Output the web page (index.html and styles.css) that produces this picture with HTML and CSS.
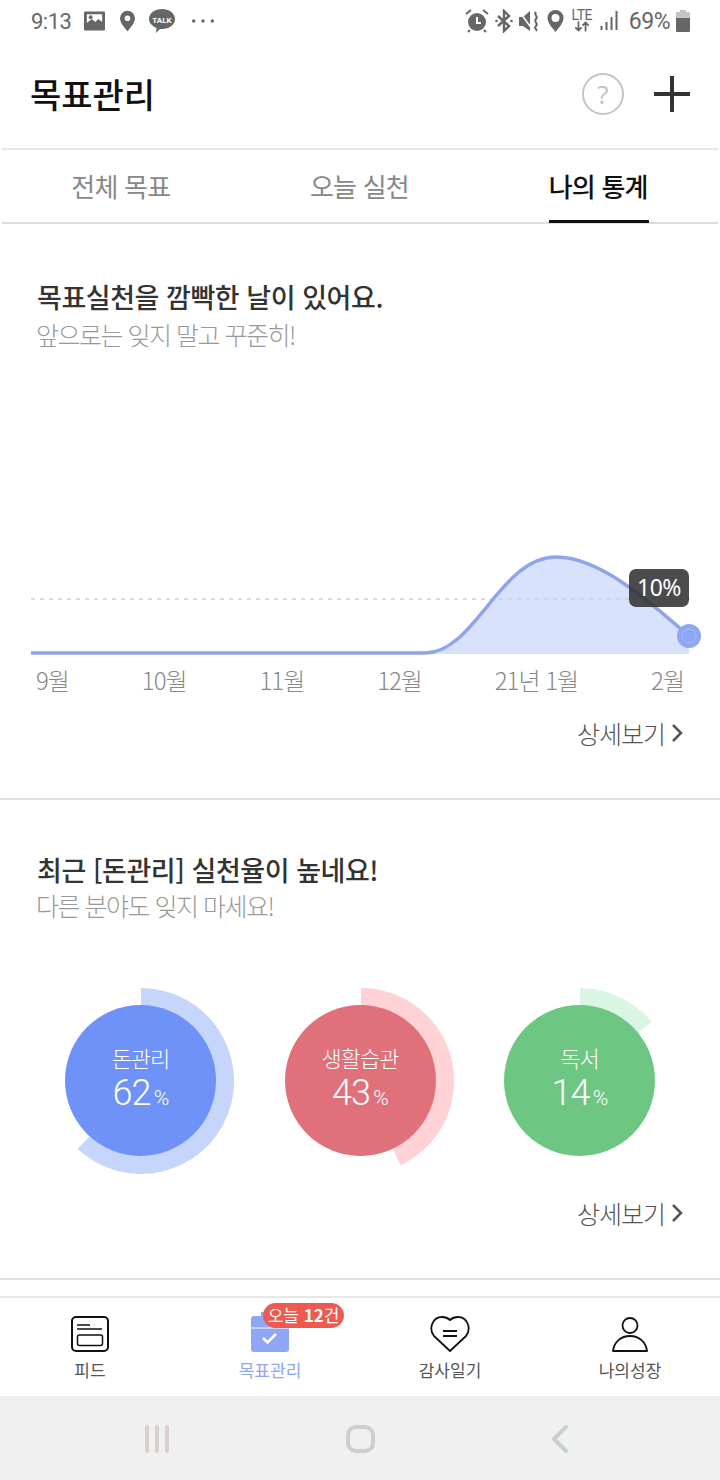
FILE: index.html
```html
<!DOCTYPE html>
<html lang="ko">

<head>
    <meta charset="UTF-8">
    <meta name="viewport" content="width=device-width, initial-scale=1.0">
    <title>목표관리</title>
    <link rel="stylesheet" href="styles.css">
</head>

<body>
    <div class="screen">
        <div class="status">
            <div class="status-left">
                <span class="clock">9:13</span>
                <svg class="ic" width="21" height="20" viewBox="0 0 22 20"><path fill="#666" fill-rule="evenodd" d="M1 0h20a1 1 0 0 1 1 1v18a1 1 0 0 1-1 1H1a1 1 0 0 1-1-1V1a1 1 0 0 1 1-1zM3 3v9l5-4 4 3 3-3 4 3V3z"/><circle cx="7" cy="6" r="2" fill="#666"/></svg>
                <svg class="ic pin" width="15" height="22" viewBox="0 0 16 22"><path fill="#666" fill-rule="evenodd" d="M8 0a8 8 0 0 1 8 8c0 5-5 10-8 14C5 18 0 13 0 8a8 8 0 0 1 8-8zm0 5a3 3 0 1 0 0 6 3 3 0 0 0 0-6z"/></svg>
                <svg class="ic talk" width="26" height="24" viewBox="0 0 26 24"><path fill="#666" d="M13 0c7 0 13 4 13 10s-6 10-13 10h-2l-4 4 .5-5C3 17 0 14 0 10 0 4 6 0 13 0z"/><text x="13" y="13.500" class="talk-text">TALK</text></svg>
                <svg class="ic dots" width="22" height="4" viewBox="0 0 22 4"><circle cx="1.700" cy="2" r="1.700" fill="#666"/><circle cx="11" cy="2" r="1.700" fill="#666"/><circle cx="20.300" cy="2" r="1.700" fill="#666"/></svg>
            </div>
            <div class="status-right">
                <svg width="24" height="24" viewBox="0 0 24 24"><circle cx="12" cy="13" r="9" fill="#666"/><path d="M12 8v6h4" stroke="#fff" stroke-width="2" fill="none"/><path d="M1 5l5-4M23 5l-5-4M5 21l-2 2M19 21l2 2" stroke="#666" stroke-width="2"/></svg>
                <svg width="18" height="24" viewBox="0 0 18 24"><path d="M3 7l11 10-5 5V2l5 5L3 17" stroke="#666" stroke-width="2.400" fill="none"/><circle cx="1.500" cy="12" r="1.300" fill="#666"/><circle cx="16.500" cy="12" r="1.300" fill="#666"/></svg>
                <svg width="22" height="24" viewBox="0 0 22 24"><path fill="#666" d="M0 8h4l7-6v20l-7-5H0z"/><path d="M0 2l13 18" stroke="#fff" stroke-width="1.500"/><path d="M17 3c-3 3 3 4 0 7s3 4 0 7 2 3 0 5" stroke="#666" stroke-width="2" fill="none"/></svg>
                <svg width="17" height="22" viewBox="0 0 16 22"><path fill="#666" fill-rule="evenodd" d="M8 0a8 8 0 0 1 8 8c0 5-5 10-8 14C5 18 0 13 0 8a8 8 0 0 1 8-8zm0 4a4 4 0 1 0 0 8 4 4 0 0 0 0-8z"/></svg>
                <div class="lte">
                    <span class="lte-text">LTE</span>
                    <svg width="16" height="11" viewBox="0 0 18 11"><path d="M5 0v10M1.500 6.500L5 10l3.500-3.500M13 11V1M9.500 4.500L13 1l3.500 3.500" stroke="#666" stroke-width="2" fill="none"/></svg>
                </div>
                <svg class="signal" width="19" height="22" viewBox="0 0 19 22"><path d="M1.500 16v4M6.500 12v8M11.500 7v13M16.500 1v19" stroke="#666" stroke-width="2"/></svg>
                <span class="batt-num">69%</span>
                <svg width="14" height="22" viewBox="0 0 14 22"><path fill="#c4c4c4" d="M4 0h6v2h3a1 1 0 0 1 1 1v5H0V3a1 1 0 0 1 1-1h3z"/><path fill="#666" d="M0 8h14v13a1 1 0 0 1-1 1H1a1 1 0 0 1-1-1z"/></svg>
            </div>
        </div>

        <div class="topbar">
            <h1 class="page-title">목표관리</h1>
            <div class="topbar-btns">
                <div class="help">?</div>
                <svg width="36" height="36" viewBox="0 0 36 36"><path d="M18 1v34M1 18h34" stroke="#333" stroke-width="4" stroke-linecap="round"/></svg>
            </div>
        </div>

        <div class="tabs">
            <div class="tab"><span>전체 목표</span></div>
            <div class="tab"><span>오늘 실천</span></div>
            <div class="tab on"><span>나의 통계</span></div>
        </div>

        <div class="content">
            <section class="block block-chart">
                <h2>목표실천을 깜빡한 날이 있어요.</h2>
                <p>앞으로는 잊지 말고 꾸준히!</p>
                <div class="chart">
                    <svg width="720" height="130" viewBox="0 540 720 130">
                        <path d="M425 654C475 654 500 557 556 557C600 557 650 602 689 636V654Z" fill="#d9e2fc"/>
                        <path d="M31 599H690" stroke="#cfcfcf" stroke-width="1.500" stroke-dasharray="4 5" fill="none"/>
                        <path d="M31 653H425C475 653 500 557 556 557C600 557 650 602 689 636" stroke="#8ea5eb" stroke-width="3.500" fill="none"/>
                        <circle cx="689" cy="636" r="12" fill="#8ea6f5"/>
                        <circle cx="689" cy="636" r="7" fill="none" stroke="#a9bcf7" stroke-width="1"/>
                    </svg>
                    <div class="tip">10%</div>
                </div>
                <div class="axis">
                    <span>9월</span><span>10월</span><span>11월</span><span>12월</span><span>21년 1월</span><span>2월</span>
                </div>
                <a class="more">상세보기<svg width="12" height="20" viewBox="0 0 12 20"><path d="M2 2l8 8-8 8" stroke="#555" stroke-width="2.500" fill="none"/></svg></a>
            </section>

            <section class="block block-rate">
                <h2>최근 [돈관리] 실천율이 높네요!</h2>
                <p>다른 분야도 잊지 마세요!</p>
                <div class="donuts">
                    <div class="donut">
                        <svg width="190" height="190" viewBox="0 0 190 190"><path d="M95 2A93 93 0 1 1 31.600 163L95 95V2Z" fill="#c6d5fc"/></svg>
                        <div class="disc blue"><span class="d-name">돈관리</span><span class="d-val">62<small>%</small></span></div>
                    </div>
                    <div class="donut">
                        <svg width="190" height="190" viewBox="0 0 190 190"><path d="M95 2A93 93 0 0 1 134.600 179.200L95 95V2Z" fill="#ffd2d6"/></svg>
                        <div class="disc red"><span class="d-name">생활습관</span><span class="d-val">43<small>%</small></span></div>
                    </div>
                    <div class="donut">
                        <svg width="190" height="190" viewBox="0 0 190 190"><path d="M95 2A93 93 0 0 1 166.600 35.800L95 95V2Z" fill="#daf5e3"/></svg>
                        <div class="disc green"><span class="d-name">독서</span><span class="d-val">14<small>%</small></span></div>
                    </div>
                </div>
                <a class="more">상세보기<svg width="12" height="20" viewBox="0 0 12 20"><path d="M2 2l8 8-8 8" stroke="#555" stroke-width="2.500" fill="none"/></svg></a>
            </section>
        </div>

        <nav class="nav">
            <div class="nav-item">
                <svg width="38" height="36" viewBox="0 0 38 36"><rect x="1" y="1" width="36" height="34" rx="4" fill="none" stroke="#111" stroke-width="2"/><path d="M6 9h13M6 13h25" stroke="#111" stroke-width="1.500"/><rect x="6.500" y="19" width="25" height="10.500" rx="2" fill="none" stroke="#111" stroke-width="1.500"/></svg>
                <span>피드</span>
            </div>
            <div class="nav-item on">
                <svg class="cal" width="38" height="36" viewBox="0 0 38 36"><rect x="10" y="-4" width="3" height="8" fill="#8ea6f5"/><path d="M3 0h32a3 3 0 0 1 3 3v30a3 3 0 0 1-3 3H3a3 3 0 0 1-3-3V3a3 3 0 0 1 3-3z" fill="#8ea6f5"/><path d="M0 12h38" stroke="#fff" stroke-width="1"/><path d="M12 22l4.500 4.500L25 18" stroke="#fff" stroke-width="2.500" fill="none"/></svg>
                <span>목표관리</span>
                <div class="badge">오늘 <b>12</b>건</div>
            </div>
            <div class="nav-item">
                <svg width="40" height="36" viewBox="0 0 40 36"><path d="M20 35L4 20C-2 12 3 1 12 1c3 0 6 1 8 3 2-2 5-3 8-3 9 0 14 11 8 19z" fill="none" stroke="#111" stroke-width="1.800" stroke-linejoin="round"/><path d="M13 15h14M13 20h14" stroke="#111" stroke-width="1.800"/></svg>
                <span>감사일기</span>
            </div>
            <div class="nav-item">
                <svg width="38" height="36" viewBox="0 0 38 36"><circle cx="19" cy="9.500" r="7.500" fill="none" stroke="#111" stroke-width="1.800"/><path d="M2 35c1-9 8-15 17-15s16 6 17 15z" fill="none" stroke="#111" stroke-width="1.800" stroke-linejoin="round"/></svg>
                <span>나의성장</span>
            </div>
        </nav>

        <div class="sysnav">
            <svg width="26" height="28" viewBox="0 0 26 28"><path d="M3 2v24M13 2v24M23 2v24" stroke="#d9cfcb" stroke-width="4" stroke-linecap="round"/></svg>
            <svg width="29" height="28" viewBox="0 0 29 28"><rect x="2" y="2" width="25" height="24" rx="8" fill="none" stroke="#c9d1c8" stroke-width="4"/></svg>
            <svg width="18" height="28" viewBox="0 0 18 28"><path d="M16 2L4 14l12 12" stroke="#c5d1cf" stroke-width="4" fill="none" stroke-linecap="round"/></svg>
        </div>
    </div>
</body>

</html>
```

FILE: styles.css
```css
* {
    box-sizing: border-box;
}

body {
    margin: 0;
    background: #fff;
    font-family: "Noto Sans CJK KR", "Noto Sans", sans-serif;
    color: #222;
}

.screen {
    width: 720px;
    height: 1480px;
    display: flex;
    flex-direction: column;
    overflow: hidden;
}

.status {
    height: 40px;
    display: flex;
    justify-content: space-between;
    align-items: center;
    padding: 2px 30px 0 31px;
    color: #666;
    font-family: Roboto, sans-serif;
}

.status-left,
.status-right {
    display: flex;
    align-items: center;
}

.status-right {
    gap: 6px;
}

.clock {
    width: 53px;
    font-size: 22px;
    letter-spacing: -0.5px;
}

.ic {
    display: block;
}

.pin {
    margin-left: 15px;
}

.talk {
    margin-left: 14px;
}

.dots {
    margin-left: 17px;
}

.talk-text {
    font-size: 8px;
    font-weight: 700;
    fill: #fff;
    text-anchor: middle;
    font-family: Roboto, sans-serif;
}

.lte {
    display: flex;
    flex-direction: column;
    align-items: center;
    width: 20px;
    margin-left: 2px;
}

.lte-text {
    font-size: 14px;
    line-height: 11px;
    letter-spacing: -0.5px;
}

.signal {
    margin-left: 2px;
}

.batt-num {
    font-size: 23px;
    letter-spacing: -0.5px;
    margin-left: 4px;
}

.topbar {
    height: 110px;
    display: flex;
    justify-content: space-between;
    align-items: center;
    margin: 0 2px;
    padding: 0 28px;
    border-bottom: 2px solid #e8e8e8;
}

.page-title {
    margin: 0 0 2px;
    font-size: 34px;
    font-weight: 500;
    color: #111;
}

.topbar-btns {
    display: flex;
    align-items: center;
    gap: 30px;
}

.help {
    width: 42px;
    height: 42px;
    border: 2px solid #c4c4c4;
    border-radius: 50%;
    color: #c4c4c4;
    font-size: 26px;
    line-height: 38px;
    text-align: center;
    font-family: "Noto Sans", sans-serif;
}

.tabs {
    height: 74px;
    display: flex;
    margin: 0 2px;
    border-bottom: 2px solid #ddd;
}

.tab {
    flex: 1;
    display: flex;
    justify-content: center;
    font-size: 26px;
    letter-spacing: -0.8px;
    color: #888;
}

.tab span {
    display: block;
    width: 100px;
    white-space: nowrap;
    line-height: 72px;
    height: 73px;
}

.tab.on span {
    color: #111;
    font-weight: 500;
    border-bottom: 3px solid #111;
}

.content {
    flex: 1;
}

.block {
    border-bottom: 2px solid #e0e0e0;
}

.block-chart {
    height: 576px;
    padding-top: 53px;
}

.block-rate {
    height: 480px;
    padding-top: 50px;
}

.block h2 {
    margin: 0;
    padding-left: 37px;
    font-size: 27px;
    letter-spacing: -0.45px;
    line-height: 40px;
    font-weight: 500;
    color: #333;
}

.block p {
    margin: 0;
    padding-left: 36px;
    font-size: 25px;
    letter-spacing: -1.5px;
    line-height: 34px;
    font-weight: 300;
    color: #999;
}

.block-rate p {
    margin-top: -2px;
}

.chart {
    position: relative;
    height: 130px;
    margin-top: 189px;
}

.chart svg {
    display: block;
}

.tip {
    position: absolute;
    left: 629px;
    top: 29px;
    width: 60px;
    height: 38px;
    border-radius: 7px;
    background: rgba(50, 50, 50, 0.88);
    color: #fff;
    font-size: 23px;
    letter-spacing: -0.5px;
    line-height: 36px;
    text-align: center;
    font-family: "Noto Sans", sans-serif;
}

.axis {
    display: flex;
    justify-content: space-between;
    padding: 0 36px;
    font-size: 24px;
    letter-spacing: -1px;
    line-height: 30px;
    font-weight: 300;
    color: #888;
    margin-top: -5px;
}

.more {
    display: flex;
    justify-content: flex-end;
    align-items: center;
    gap: 6px;
    padding-right: 37px;
    margin-top: 20px;
    font-size: 25px;
    letter-spacing: -1px;
    line-height: 36px;
    font-weight: 300;
    color: #555;
}

.block-rate .more {
    margin-top: 19px;
}

.donuts {
    display: flex;
    justify-content: space-between;
    padding: 0 45px 0 46px;
    margin-top: 64px;
}

.donut {
    position: relative;
    width: 190px;
    height: 190px;
}

.donut svg {
    display: block;
}

.disc {
    position: absolute;
    left: 19px;
    top: 19px;
    width: 151px;
    height: 151px;
    border-radius: 50%;
    color: #fff;
    display: flex;
    flex-direction: column;
    align-items: center;
    padding-top: 36px;
}

.blue {
    background: #6f92f8;
}

.red {
    background: #e0707a;
}

.green {
    background: #6dc783;
}

.d-name {
    font-size: 22px;
    letter-spacing: -1px;
    line-height: 32px;
    font-weight: 300;
}

.d-val {
    font-size: 36px;
    letter-spacing: -0.8px;
    line-height: 40px;
    font-weight: 300;
    font-family: Roboto, "Noto Sans", sans-serif;
}

.d-val small {
    font-size: 21px;
    margin-left: 3px;
}

.nav {
    height: 100px;
    display: flex;
    border-top: 2px solid #e8e8e8;
    padding: 18px 0 0;
}

.nav-item {
    position: relative;
    flex: 1;
    display: flex;
    flex-direction: column;
    align-items: center;
    font-size: 17px;
    line-height: 24px;
    color: #555;
}

.nav-item svg {
    display: block;
    margin-bottom: 6px;
}

.nav-item .cal {
    overflow: visible;
}

.nav-item.on {
    color: #8ea6f0;
}

.badge {
    position: absolute;
    left: 83px;
    top: -13px;
    width: 81px;
    height: 25px;
    border-radius: 13px;
    background: #ef5a50;
    color: #fff;
    font-size: 17px;
    line-height: 24px;
    text-align: center;
    white-space: nowrap;
}

.sysnav {
    height: 84px;
    background: #f0f0f0;
    display: flex;
    align-items: center;
    justify-content: space-between;
    padding: 2px 152px 0 144px;
}
```
